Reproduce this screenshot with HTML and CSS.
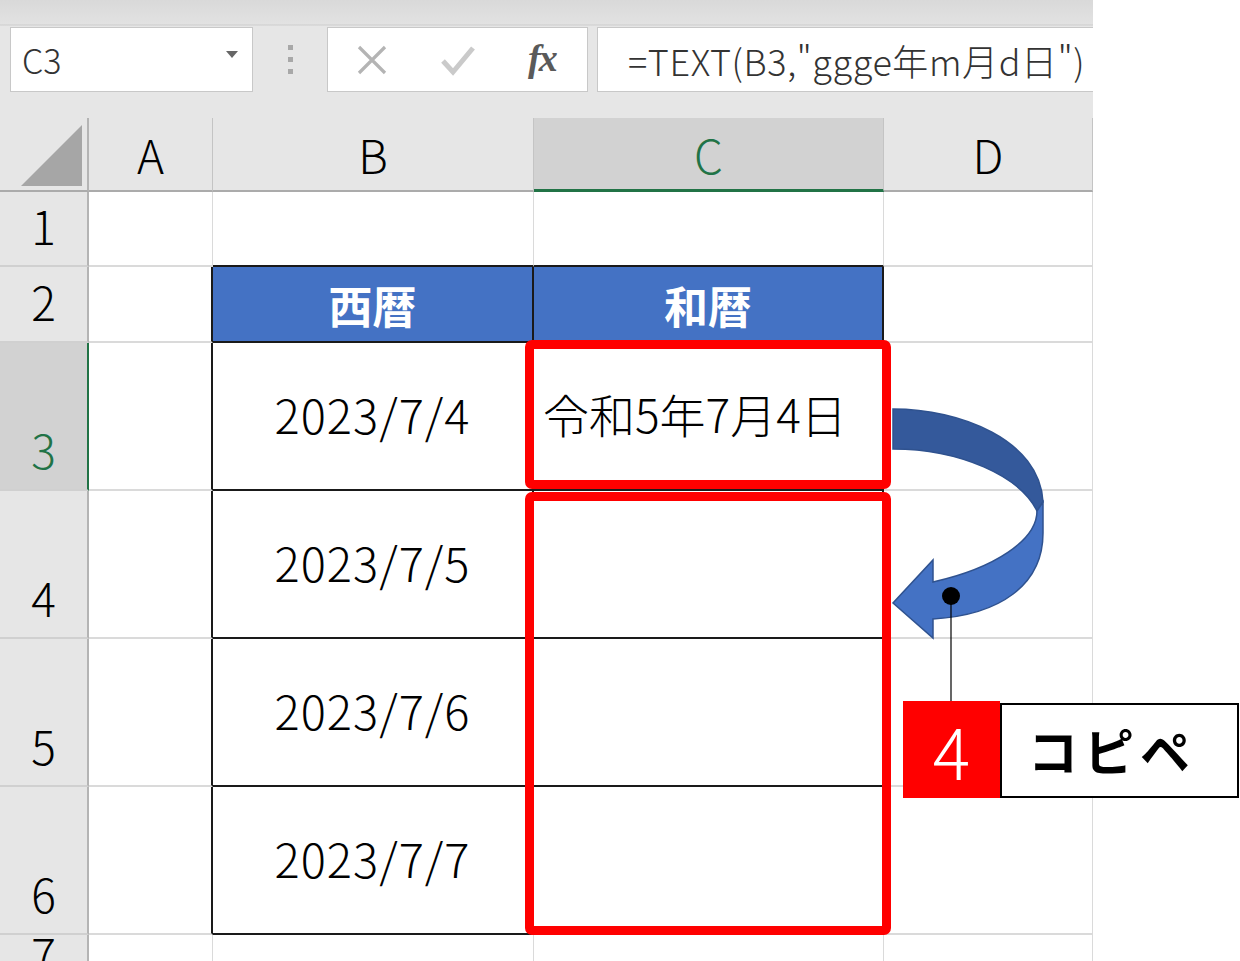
FILE: index.html
```html
<!DOCTYPE html>
<html lang="ja">
<head>
  <meta charset="UTF-8" />
  <title>TEXT関数 和暦 コピペ</title>
  <link rel="stylesheet" href="styles.css">
</head>
<body>
  <div class="app">
    <div class="toolbar">
      <div class="namebox">
        <span>C3</span>
        <span class="caret"></span>
      </div>
      <div class="grip"><i></i><i></i><i></i></div>
      <div class="fx-buttons">
        <svg class="btn-x" width="34" height="34" viewBox="0 0 34 34">
          <path d="M4 4 L30 30 M30 4 L4 30" stroke="#b4b4b4" stroke-width="3.2" fill="none" />
        </svg>
        <svg class="btn-ok" width="36" height="34" viewBox="0 0 36 34">
          <path d="M3 18 L13 29 L33 5" stroke="#cacaca" stroke-width="5" fill="none" />
        </svg>
        <span class="btn-fx">fx</span>
      </div>
      <div class="formula">=TEXT(B3,"ggge年m月d日")</div>
    </div>

    <div class="sheet">
      <!-- 列見出し -->
      <div class="corner"><span class="select-all"></span></div>
      <div class="ch">A</div>
      <div class="ch">B</div>
      <div class="ch active">C</div>
      <div class="ch">D</div>

      <!-- 1行目 -->
      <div class="rh">1</div>
      <div class="cell"></div>
      <div class="cell top-edge"></div>
      <div class="cell top-edge"></div>
      <div class="cell"></div>

      <!-- 2行目 -->
      <div class="rh">2</div>
      <div class="cell left-edge"></div>
      <div class="cell tb head">西暦</div>
      <div class="cell tb head">和暦</div>
      <div class="cell"></div>

      <!-- 3行目 -->
      <div class="rh active">3</div>
      <div class="cell left-edge"></div>
      <div class="cell tb date">2023/7/4</div>
      <div class="cell tb wareki">令和5年7月4日</div>
      <div class="cell"></div>

      <!-- 4行目 -->
      <div class="rh">4</div>
      <div class="cell left-edge"></div>
      <div class="cell tb date">2023/7/5</div>
      <div class="cell tb"></div>
      <div class="cell"></div>

      <!-- 5行目 -->
      <div class="rh">5</div>
      <div class="cell left-edge"></div>
      <div class="cell tb date">2023/7/6</div>
      <div class="cell tb"></div>
      <div class="cell"></div>

      <!-- 6行目 -->
      <div class="rh">6</div>
      <div class="cell left-edge"></div>
      <div class="cell tb date">2023/7/7</div>
      <div class="cell tb"></div>
      <div class="cell"></div>

      <!-- 7行目 -->
      <div class="rh">7</div>
      <div class="cell"></div>
      <div class="cell"></div>
      <div class="cell"></div>
      <div class="cell"></div>
    </div>

    <!-- 注釈 -->
    <div class="mark mark-src"></div>
    <div class="mark mark-dst"></div>

    <svg class="arrow" width="180" height="320" viewBox="0 0 180 320">
      <path d="M13,19 C80,19 160,50 163,112 L157,121 C140,86 80,59 13,59 Z"
            fill="#34599b" stroke="#2f528f" stroke-width="1.5" />
      <path d="M163,112 L163,143 C163,195 120,225 53,229 L53,248 L13,213 L53,170 L53,192 C115,178 157,150 157,121 Z"
            fill="#4472c4" stroke="#2f528f" stroke-width="1.5" />
      <line x1="71" y1="206" x2="71" y2="312" stroke="#000" stroke-width="1.2" />
      <circle cx="71" cy="206" r="9" fill="#000" />
    </svg>

    <div class="callout">
      <div class="step">4</div>
      <div class="step-label">コピペ</div>
    </div>
  </div>
</body>
</html>
```

FILE: styles.css
```css
/* 基本 */
*, *::before, *::after {
  box-sizing: border-box;
}

body {
  margin: 0;
  background: #fff;
  font-family: "Noto Sans CJK JP", "Noto Sans", sans-serif;
  font-weight: 300;
  color: #000;
}

.app {
  position: relative;
  width: 1240px;
  height: 961px;
  overflow: hidden;
}

/* 数式バー */
.toolbar {
  width: 1093px;
  height: 118px;
  padding-top: 27px;
  display: flex;
  align-items: flex-start;
  background: linear-gradient(#d9d9d9 0, #e2e2e2 24px, #cdcdcd 25px, #e6e6e6 26px, #e6e6e6 100%);
}

.namebox {
  margin-left: 10px;
  width: 243px;
  height: 65px;
  background: #fff;
  border: 1px solid #c8c8c8;
  display: flex;
  align-items: center;
  justify-content: space-between;
  padding: 0 14px 0 11px;
  font-size: 34px;
  color: #333;
}

.caret {
  width: 0;
  height: 0;
  border-left: 6px solid transparent;
  border-right: 6px solid transparent;
  border-top: 7px solid #666;
  margin-bottom: 10px;
}

.grip {
  width: 74px;
  height: 65px;
  display: flex;
  flex-direction: column;
  align-items: center;
  justify-content: center;
  gap: 7px;
}

.grip i {
  display: block;
  width: 5px;
  height: 5px;
  background: #a8a8a8;
}

.fx-buttons {
  width: 261px;
  height: 65px;
  background: #fff;
  border: 1px solid #c8c8c8;
  display: flex;
  align-items: center;
  padding-left: 27px;
}

.btn-x {
  margin-right: 51px;
}

.btn-ok {
  margin-right: 52px;
}

.btn-fx {
  font-family: "Liberation Serif", "DejaVu Serif", serif;
  font-style: italic;
  font-weight: 700;
  font-size: 38px;
  color: #5a5a5a;
  letter-spacing: -2px;
  margin-top: -4px;
}

.formula {
  margin-left: 9px;
  flex: 1;
  height: 65px;
  background: #fff;
  border: 1px solid #c8c8c8;
  border-right: none;
  padding-left: 30px;
  display: flex;
  align-items: center;
  font-size: 36px;
  letter-spacing: 0.6px;
  color: #333;
  white-space: nowrap;
  overflow: hidden;
}

/* シート */
.sheet {
  width: 1093px;
  display: grid;
  grid-template-columns: 89px 124px 321px 350px 209px;
  grid-template-rows: 74px 75px 76px 148px 148px 148px 148px 60px;
}

.corner {
  background: #e6e6e6;
  border-right: 2px solid #b4b4b4;
  border-bottom: 2px solid #ababab;
  position: relative;
}

.select-all {
  position: absolute;
  right: 5px;
  bottom: 4px;
  width: 0;
  height: 0;
  border-left: 61px solid transparent;
  border-bottom: 61px solid #a6a6a6;
}

.ch {
  background: #e6e6e6;
  border-right: 1px solid #c4c4c4;
  border-bottom: 2px solid #ababab;
  display: flex;
  align-items: center;
  justify-content: center;
  font-size: 46px;
}

.ch.active {
  background: #d2d2d2;
  border-bottom: 3px solid #217346;
  color: #217346;
}

.rh {
  background: #e6e6e6;
  border-right: 2px solid #b4b4b4;
  border-bottom: 2px solid #d0d0d0;
  display: flex;
  align-items: flex-end;
  justify-content: center;
  font-size: 46px;
  line-height: 1;
  padding-bottom: 17px;
}

.rh.active {
  background: #d2d2d2;
  border-right-color: #217346;
  color: #217346;
}

.cell {
  border-right: 1px solid #dadada;
  border-bottom: 2px solid #dadada;
  display: flex;
  align-items: center;
  justify-content: center;
}

/* 表の罫線 */
.cell.top-edge {
  border-bottom-color: #1a1a1a;
}

.cell.left-edge {
  border-right: 2px solid #1a1a1a;
}

.cell.tb {
  border-right: 2px solid #1a1a1a;
  border-bottom: 2px solid #1a1a1a;
}

.cell.head {
  background: #4472c4;
  color: #fff;
  font-weight: 700;
  font-size: 44px;
  padding-top: 2px;
}

.cell.date {
  font-size: 47px;
  letter-spacing: 1px;
  padding-bottom: 6px;
}

.cell.wareki {
  justify-content: flex-start;
  padding-left: 9px;
  padding-bottom: 6px;
  font-size: 46px;
}

/* 赤枠 */
.mark {
  position: absolute;
  left: 525px;
  width: 366px;
  border: 9px solid #ff0000;
  border-radius: 7px;
}

.mark-src {
  top: 340px;
  height: 149px;
}

.mark-dst {
  top: 492px;
  height: 443px;
}

/* 矢印 */
.arrow {
  position: absolute;
  left: 880px;
  top: 390px;
}

/* 手順ラベル */
.callout {
  position: absolute;
  left: 903px;
  top: 701px;
  display: flex;
  align-items: flex-start;
}

.step {
  width: 97px;
  height: 97px;
  background: #ff0000;
  color: #fff;
  font-size: 70px;
  font-weight: 200;
  line-height: 97px;
  text-align: center;
}

.step-label {
  margin-top: 2px;
  width: 239px;
  height: 95px;
  border: 2px solid #000;
  background: #fff;
  font-size: 50px;
  font-weight: 700;
  letter-spacing: 6px;
  line-height: 88px;
  padding-left: 26px;
}
```
